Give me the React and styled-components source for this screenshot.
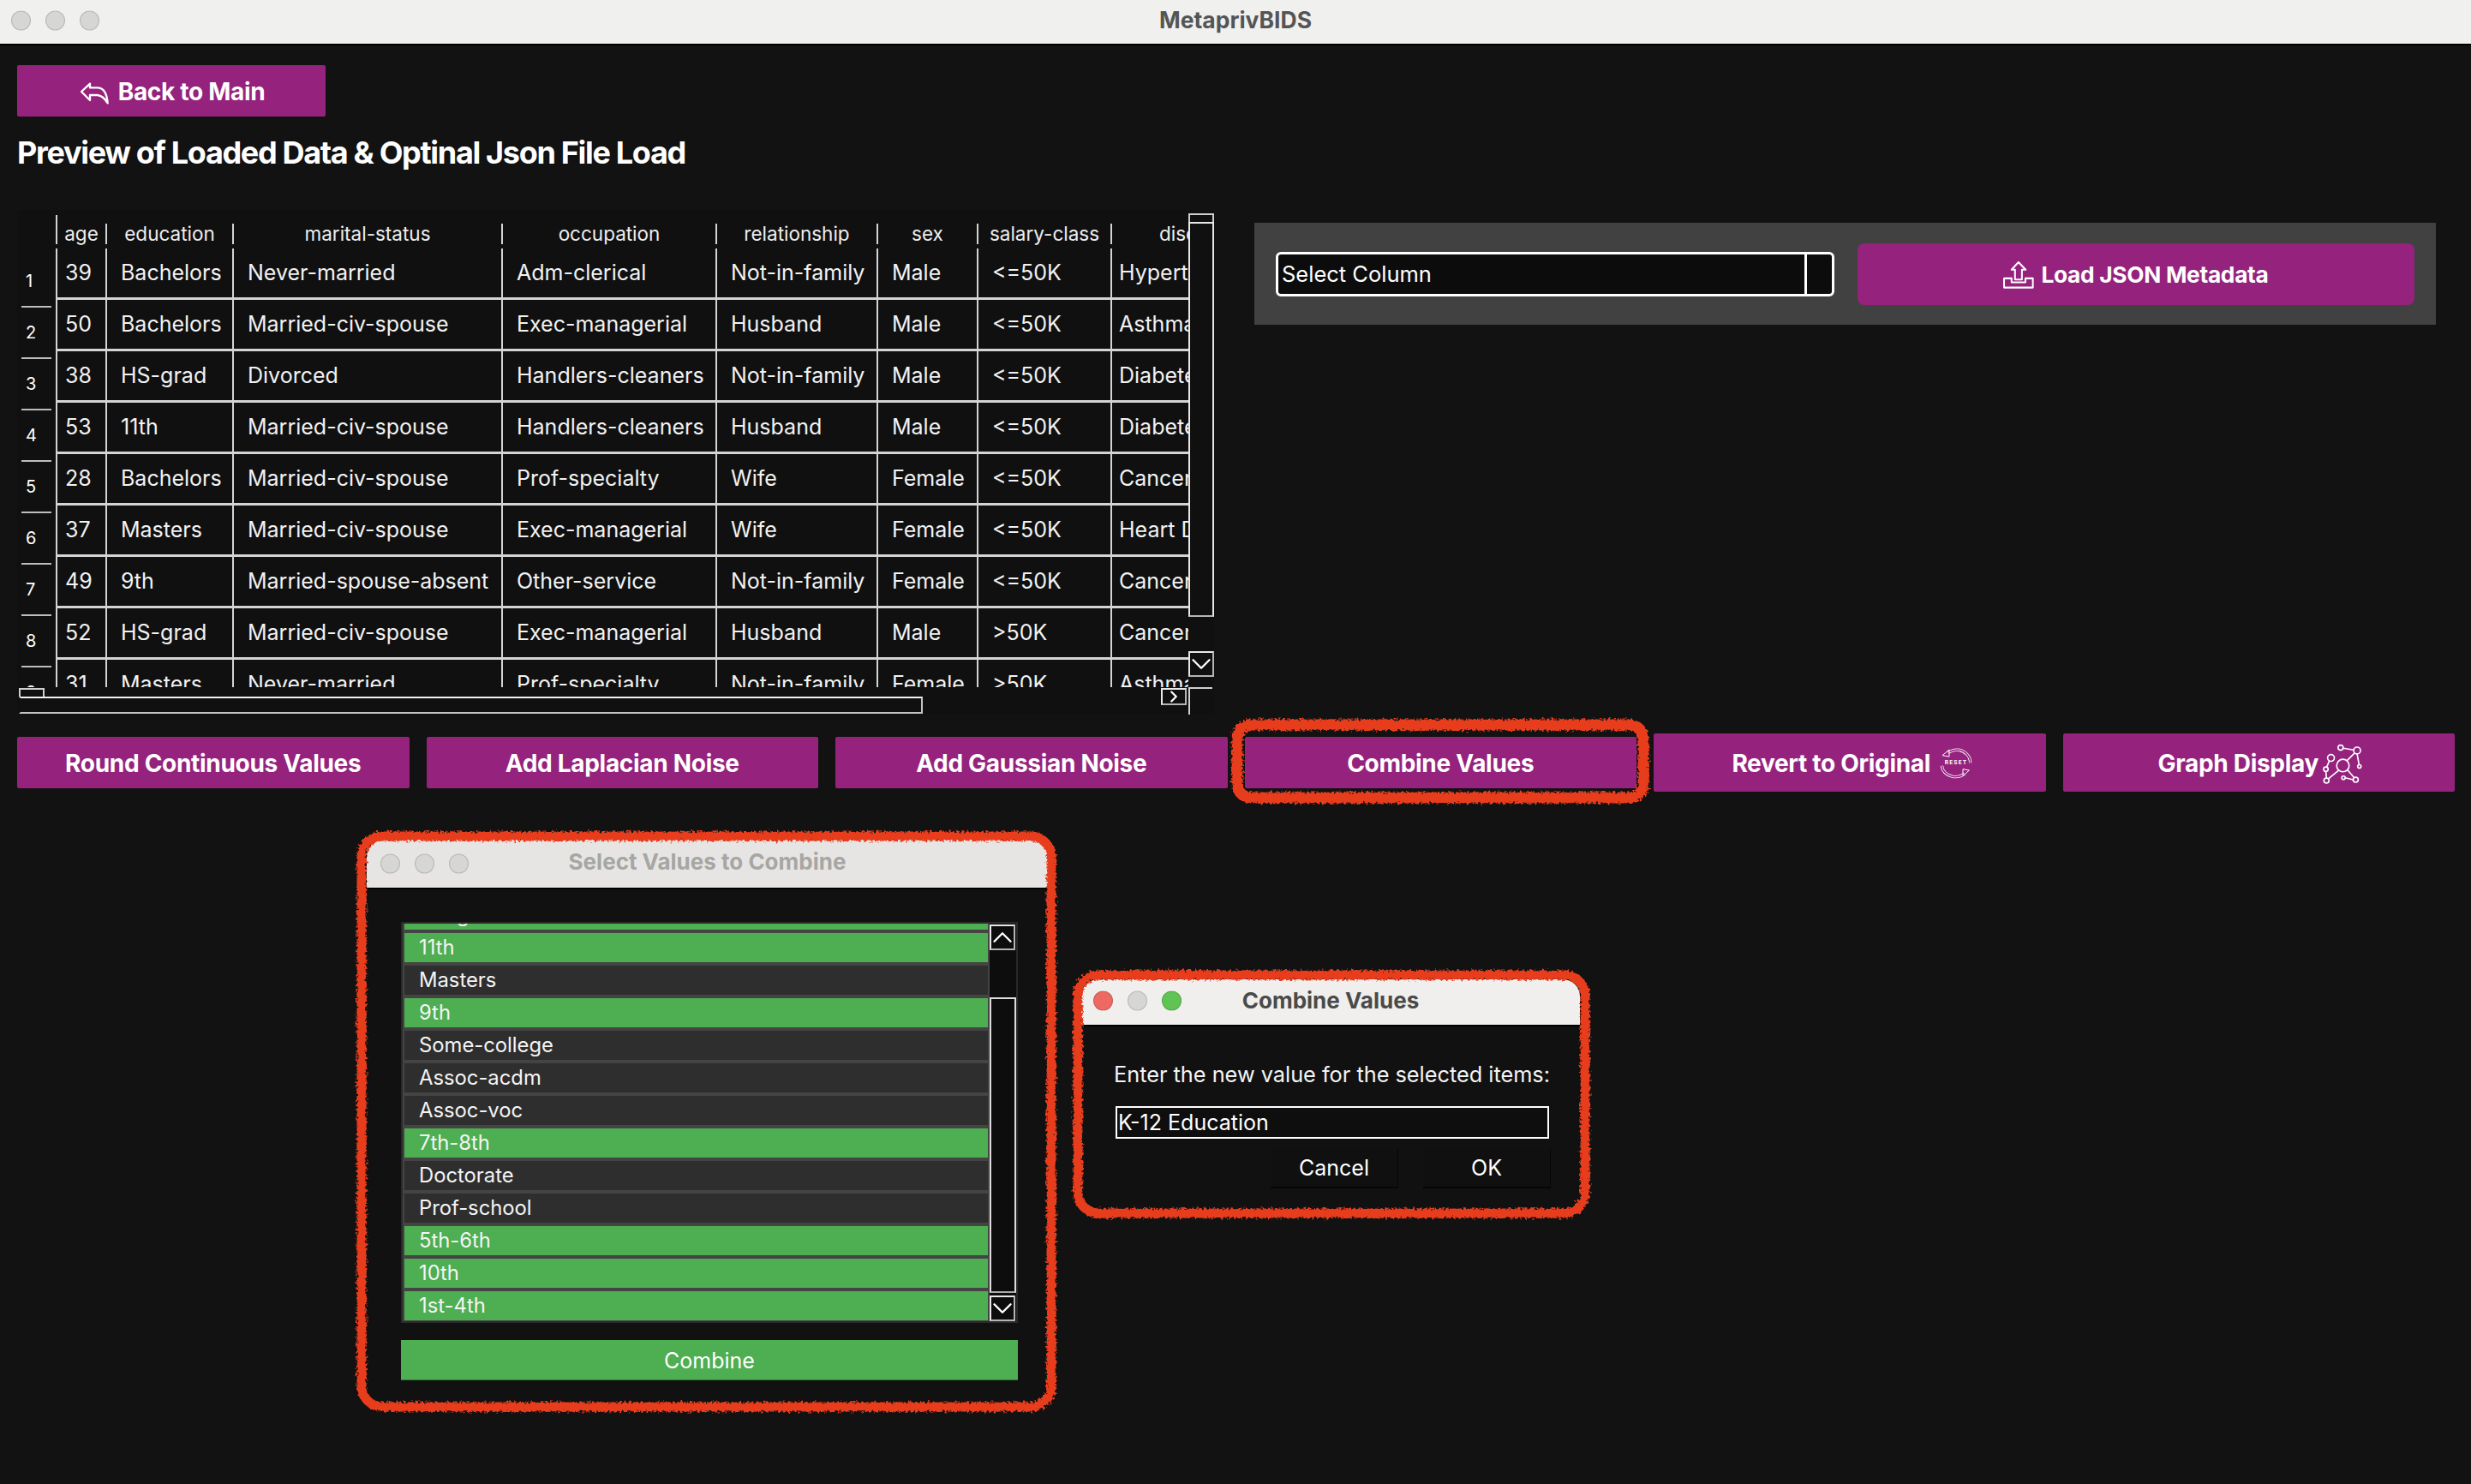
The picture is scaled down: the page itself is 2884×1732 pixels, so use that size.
import React from 'react'
import styled, { createGlobalStyle } from 'styled-components'
import { ChevronDown, ChevronUp, ChevronRight } from 'lucide-react'

const PURPLE = '#95237e'
const GREEN = '#4eae52'
const LINE = '#d4d4d4'

const columns = ['age', 'education', 'marital-status', 'occupation', 'relationship', 'sex', 'salary-class', 'disease']

const rows = [
  ['39', 'Bachelors', 'Never-married', 'Adm-clerical', 'Not-in-family', 'Male', '<=50K', 'Hypertension'],
  ['50', 'Bachelors', 'Married-civ-spouse', 'Exec-managerial', 'Husband', 'Male', '<=50K', 'Asthma'],
  ['38', 'HS-grad', 'Divorced', 'Handlers-cleaners', 'Not-in-family', 'Male', '<=50K', 'Diabetes'],
  ['53', '11th', 'Married-civ-spouse', 'Handlers-cleaners', 'Husband', 'Male', '<=50K', 'Diabetes'],
  ['28', 'Bachelors', 'Married-civ-spouse', 'Prof-specialty', 'Wife', 'Female', '<=50K', 'Cancer'],
  ['37', 'Masters', 'Married-civ-spouse', 'Exec-managerial', 'Wife', 'Female', '<=50K', 'Heart Disease'],
  ['49', '9th', 'Married-spouse-absent', 'Other-service', 'Not-in-family', 'Female', '<=50K', 'Cancer'],
  ['52', 'HS-grad', 'Married-civ-spouse', 'Exec-managerial', 'Husband', 'Male', '>50K', 'Cancer'],
  ['31', 'Masters', 'Never-married', 'Prof-specialty', 'Not-in-family', 'Female', '>50K', 'Asthma'],
]

const values = [
  ['HS-grad', true],
  ['11th', true],
  ['Masters', false],
  ['9th', true],
  ['Some-college', false],
  ['Assoc-acdm', false],
  ['Assoc-voc', false],
  ['7th-8th', true],
  ['Doctorate', false],
  ['Prof-school', false],
  ['5th-6th', true],
  ['10th', true],
  ['1st-4th', true],
]

const GlobalStyle = createGlobalStyle`
  html, body {
    margin: 0;
    padding: 0;
    background: #121212;
  }
  body {
    font-family: Inter, "Liberation Sans", sans-serif;
    color: #fff;
  }
  * {
    box-sizing: border-box;
  }
`

const Page = styled.div`
  position: relative;
  width: 2884px;
  height: 1732px;
  overflow: hidden;
  background: #121212;
`

const TitleBar = styled.div`
  position: relative;
  display: flex;
  align-items: center;
  justify-content: center;
  height: ${(p) => p.$height}px;
  padding-bottom: 5px;
  background: ${(p) => p.$bg};
  color: ${(p) => p.$color};
  font-size: ${(p) => p.$size}px;
  font-weight: 700;
  border-bottom: 2px solid #000;
`

const Lights = styled.div`
  position: absolute;
  left: ${(p) => p.$left}px;
  top: ${(p) => p.$top}px;
  transform: translateY(-50%);
  display: flex;
  gap: 17px;
`

const Light = styled.span`
  width: 23px;
  height: 23px;
  border-radius: 50%;
  background: ${(p) => p.$color || '#d6d6d4'};
  border: 1px solid rgba(0, 0, 0, 0.14);
`

const Content = styled.main`
  padding: 23px 19px 0 20px;
`

const PurpleButton = styled.button`
  display: flex;
  align-items: center;
  justify-content: center;
  border: 0;
  padding: 1px 0 0;
  border-radius: 2px;
  background: ${PURPLE};
  color: #fff;
  font-family: Inter, "Liberation Sans", sans-serif;
  font-size: 28px;
  font-weight: 700;
  letter-spacing: -0.3px;
`

const BackButton = styled(PurpleButton)`
  width: 360px;
  height: 60px;
  gap: 3px;
  padding-right: 6px;
`

const Heading = styled.h1`
  margin: 20px 0 0;
  height: 44px;
  line-height: 44px;
  font-size: 36px;
  font-weight: 700;
  letter-spacing: -1.32px;
`

const TopSection = styled.section`
  display: flex;
  align-items: flex-start;
  margin-top: 45px;
`

const TableFrame = styled.div`
  display: grid;
  grid-template-columns: 1367px 30px;
  grid-template-rows: 557px 32px;
  width: 1397px;
  height: 589px;
  background: #101010;
`

const TableView = styled.div`
  display: flex;
  overflow: hidden;
`

const RowHeaders = styled.div`
  flex: 0 0 45px;
  padding-top: 54px;
`

const RowHeader = styled.div`
  height: 60px;
  margin-left: 5px;
  width: 35px;
  padding: 14px 0 0 5px;
  border-bottom: 2px solid #bdbdbd;
  font-size: 20px;
  line-height: 30px;
`

const DataGrid = styled.div`
  flex: 1;
  overflow: hidden;
`

const GridRow = styled.div`
  display: grid;
  grid-template-columns: 58px 148px 314px 250px 188px 117px 156px 194px;
`

const HeaderRow = styled(GridRow)`
  height: 45px;
  padding-top: 16px;
`

const HeaderCell = styled.div`
  height: 24px;
  border-left: 2px solid ${LINE};
  white-space: nowrap;
  text-align: center;
  font-size: 22.5px;
  line-height: 24px;
  color: #ededed;

  &:first-child {
    height: 34px;
    margin-top: -10px;
    padding-top: 10px;
  }
`

const DataRow = styled(GridRow)`
  height: 60px;
`

const DataCell = styled.div`
  padding: 11px 0 0 ${(p) => p.$pad}px;
  height: 60px;
  border-left: 2px solid ${LINE};
  border-bottom: 3px solid ${LINE};
  white-space: nowrap;
  font-size: 25px;
  line-height: 34px;
  color: #f2f2f2;
`

const VScroll = styled.div`
  display: flex;
  flex-direction: column;
  padding-top: 4px;
`

const ScrollCap = styled.div`
  height: 10px;
  border: 2px solid #cfcfcf;
  border-bottom: 0;
`

const VThumb = styled.div`
  height: 461px;
  border: 2px solid #e8e8e8;
  border-bottom-color: #b5b5b5;
`

const ArrowBox = styled.div`
  display: flex;
  align-items: center;
  justify-content: center;
  flex-shrink: 0;
  width: 30px;
  height: 30px;
  margin-top: ${(p) => p.$top || 0}px;
  border: 2px solid #e8e8e8;
  border-bottom-color: #b5b5b5;
  border-right-color: #b5b5b5;
  color: #fff;

  svg {
    flex-shrink: 0;
  }
`

const HScroll = styled.div`
  display: flex;
  align-items: flex-start;
  padding: 1px 2px 0 2px;
`

const HThumbStack = styled.div`
  width: 1055px;
  display: flex;
  flex-direction: column;
`

const HCap = styled.div`
  width: 30px;
  height: 10px;
  border: 2px solid #cfcfcf;
  border-bottom: 0;
`

const HThumb = styled.div`
  height: 20px;
  border: 2px solid #f2f2f2;
  border-left-color: #101010;
  border-bottom-color: #c4c4c4;
  border-right-color: #c4c4c4;
`

const HArrow = styled(ArrowBox)`
  height: 20px;
  margin-left: auto;
`

const ScrollCorner = styled.div`
  border-top: 2px solid #d0d0d0;
  border-left: 2px solid #d0d0d0;
  margin-right: 2px;
`

const SidePanel = styled.div`
  display: flex;
  align-items: center;
  gap: 27px;
  width: 1379px;
  height: 119px;
  margin: 15px 0 0 47px;
  padding-left: 25px;
  background: #414141;
`

const SelectBox = styled.div`
  display: flex;
  width: 652px;
  height: 52px;
  background: #0c0c0c;
  border: 3px solid #fff;
  border-radius: 6px;
  font-size: 25.5px;
  line-height: 46px;
`

const SelectLabel = styled.div`
  flex: 1;
  padding-left: 4px;
  border-right: 3px solid #fff;
`

const SelectCaret = styled.div`
  width: 29px;
`

const LoadButton = styled(PurpleButton)`
  width: 650px;
  height: 72px;
  gap: 5px;
  padding-right: 3px;
  border-radius: 8px;
  font-size: 26.3px;
`

const ActionBar = styled.div`
  display: flex;
  align-items: center;
  gap: 20px;
  height: 68px;
  margin-top: 22px;
`

const ActionButton = styled(PurpleButton)`
  width: 458px;
  height: ${(p) => (p.$tall ? 68 : 60)}px;
  gap: ${(p) => p.$gap || 0}px;
  padding-left: ${(p) => (p.$tall ? 7 : 0)}px;
`

const DialogWindow = styled.div`
  position: absolute;
  left: ${(p) => p.$left}px;
  top: ${(p) => p.$top}px;
  width: ${(p) => p.$width}px;
  height: ${(p) => p.$height}px;
  overflow: hidden;
  border-radius: 20px;
  background: #111;
`

const SelectBody = styled.div`
  padding: 38px 35px 0 40px;
`

const ListFrame = styled.div`
  display: flex;
  width: 720px;
  height: 468px;
  padding: 2px;
  background: #2a2a2a;
`

const ListView = styled.div`
  flex: 0 0 685px;
  padding-left: 2px;
  overflow: hidden;
  background: #444;
`

const ListItems = styled.div`
  display: flex;
  flex-direction: column;
  gap: 4px;
  margin-top: -27px;
  margin-right: 2px;
`

const ListItem = styled.div`
  flex: 0 0 34px;
  padding-left: 17px;
  background: ${(p) => (p.$selected ? GREEN : '#2e2e2e')};
  font-size: 23.8px;
  line-height: 34px;
  color: #f4f4f4;
`

const ListScroll = styled.div`
  flex: 1;
  display: flex;
  flex-direction: column;
  padding: 1px 0 0 0;
  background: #0d0d0d;
`

const ListThumb = styled.div`
  height: 345px;
  margin-top: 55px;
  border: 2px solid #dcdcdc;
  border-bottom-color: #aaa;
`

const CombineButton = styled.button`
  display: block;
  width: 720px;
  height: 47px;
  margin-top: 20px;
  padding: 2px 0 0;
  border: 0;
  border-bottom: 1px solid #2f7a33;
  background: ${GREEN};
  color: #fff;
  font-family: Inter, "Liberation Sans", sans-serif;
  font-size: 25px;
`

const PromptBody = styled.div`
  padding: 39px 35px 0 38px;
`

const PromptLabel = styled.div`
  font-size: 25.3px;
  line-height: 34px;
  white-space: nowrap;
  color: #f4f4f4;
`

const PromptInput = styled.input`
  display: block;
  width: 506px;
  height: 38px;
  margin: 20px 0 0 2px;
  padding: 0 0 0 1px;
  border: 2px solid #fff;
  border-radius: 0;
  outline: 0;
  background: #0e0e0e;
  color: #fff;
  font-family: Inter, "Liberation Sans", sans-serif;
  font-size: 25px;
`

const PromptActions = styled.div`
  display: flex;
  justify-content: flex-end;
  gap: 29px;
  margin: 11px -1px 0 0;
`

const PromptButton = styled.button`
  width: 149px;
  height: 47px;
  padding: 0;
  border: 0;
  border-right: 1px solid #060606;
  border-bottom: 2px solid #060606;
  background: #101010;
  color: #fff;
  font-family: Inter, "Liberation Sans", sans-serif;
  font-size: 25px;
`

const Annotations = styled.svg`
  position: absolute;
  left: 0;
  top: 0;
  pointer-events: none;
`

const BackIcon = () => (
  <svg width="50" height="40" viewBox="0 0 150 120" fill="none" stroke="#fff" strokeWidth="7" strokeLinejoin="round">
    <path d="M30 60 L60 32 V46 H88 Q118 48 122 100 Q106 74 86 72 H60 V90 Z" />
  </svg>
)

const UploadIcon = () => (
  <svg width="42" height="37" viewBox="30 20 125 110" fill="none" stroke="#fff" strokeWidth="6" strokeLinejoin="round">
    <path d="M42 88 V120 H142 V88 H116 V102 H68 V88 Z" />
    <path d="M92 32 L68 58 H80 V92 H104 V58 H117 Z" />
  </svg>
)

const ResetIcon = () => (
  <svg width="40" height="40" viewBox="30 30 120 120" fill="none" strokeLinecap="butt">
    <path d="M62 52 Q100 30 128 58 Q140 70 140 88" stroke="#fff" strokeWidth="10" />
    <path d="M62 52 Q100 30 128 58 Q140 70 140 88" stroke={PURPLE} strokeWidth="5" />
    <path d="M42 62 L66 42 V66 Z" stroke="#fff" strokeWidth="3" />
    <path d="M40 98 Q44 128 78 136 Q102 140 120 126" stroke="#fff" strokeWidth="10" />
    <path d="M40 98 Q44 128 78 136 Q102 140 120 126" stroke={PURPLE} strokeWidth="5" />
    <path d="M136 114 L114 134 V110 Z" stroke="#fff" strokeWidth="3" />
    <text x="90" y="94" textAnchor="middle" fill="#fff" fontSize="20" fontWeight="700" letterSpacing="3" fontFamily="Inter, sans-serif">RESET</text>
  </svg>
)

const GraphIcon = () => (
  <svg width="53" height="52" viewBox="30 10 160 155" fill="none" stroke="#fff" strokeWidth="5">
    <path d="M124 78 L152 50 M111 34 L148 40 M160 54 L167 92 M95 112 L58 142 M50 116 L52 139 M62 79 L53 100 M126 110 L150 138 M118 138 L146 145" />
    <circle cx="110" cy="95" r="22" />
    <circle cx="160" cy="42" r="12" />
    <circle cx="102" cy="32" r="9" />
    <circle cx="168" cy="98" r="6" />
    <circle cx="68" cy="68" r="12" />
    <circle cx="50" cy="108" r="8" />
    <circle cx="52" cy="148" r="9" />
    <circle cx="112" cy="138" r="6" />
    <circle cx="155" cy="145" r="9" />
  </svg>
)

// the red marker rings somebody drew over the screenshot
const MarkerRings = () => (
  <Annotations width="2884" height="1732">
    <defs>
      <filter id="rough" x="-5%" y="-5%" width="110%" height="110%">
        <feTurbulence type="fractalNoise" baseFrequency="0.35" numOctaves="2" seed="4" />
        <feDisplacementMap in="SourceGraphic" scale="8" />
      </filter>
    </defs>
    <g fill="none" stroke="#e83c1e" strokeWidth="11" filter="url(#rough)">
      <rect x="1444" y="846" width="474" height="85" rx="16" strokeWidth="13" />
      <rect x="422" y="976" width="805" height="666" rx="24" />
      <rect x="1258" y="1138" width="592" height="278" rx="24" />
    </g>
  </Annotations>
)

const cellPadding = (index) => {
  if (index === 0) return 9
  if (index === 7) return 8
  return 16
}

const DataTable = () => (
  <TableFrame>
    <TableView>
      <RowHeaders>
        {rows.map((row, index) => (
          <RowHeader key={index}>{index + 1}</RowHeader>
        ))}
      </RowHeaders>
      <DataGrid>
        <HeaderRow>
          {columns.map((name) => (
            <HeaderCell key={name}>{name}</HeaderCell>
          ))}
        </HeaderRow>
        {rows.map((row, index) => (
          <DataRow key={index}>
            {row.map((value, cell) => (
              <DataCell key={cell} $pad={cellPadding(cell)}>{value}</DataCell>
            ))}
          </DataRow>
        ))}
      </DataGrid>
    </TableView>
    <VScroll>
      <ScrollCap />
      <VThumb />
      <ArrowBox $top={40}>
        <ChevronDown size={38} strokeWidth={1.5} />
      </ArrowBox>
    </VScroll>
    <HScroll>
      <HThumbStack>
        <HCap />
        <HThumb />
      </HThumbStack>
      <HArrow>
        <ChevronRight size={22} strokeWidth={2.5} />
      </HArrow>
    </HScroll>
    <ScrollCorner />
  </TableFrame>
)

const SelectValuesDialog = () => (
  <DialogWindow $left={428} $top={980} $width={795} $height={656}>
    <TitleBar $height={58} $bg="#e6e5e3" $color="#a6a6a4" $size={26}>
      <Lights $left={16} $top={28}>
        <Light />
        <Light />
        <Light />
      </Lights>
      Select Values to Combine
    </TitleBar>
    <SelectBody>
      <ListFrame>
        <ListView>
          <ListItems>
            {values.map(([name, selected]) => (
              <ListItem key={name} $selected={selected}>{name}</ListItem>
            ))}
          </ListItems>
        </ListView>
        <ListScroll>
          <ArrowBox>
            <ChevronUp size={38} strokeWidth={1.5} />
          </ArrowBox>
          <ListThumb />
          <ArrowBox $top={3}>
            <ChevronDown size={38} strokeWidth={1.5} />
          </ArrowBox>
        </ListScroll>
      </ListFrame>
      <CombineButton>Combine</CombineButton>
    </SelectBody>
  </DialogWindow>
)

const NewValueDialog = () => (
  <DialogWindow $left={1262} $top={1143} $width={582} $height={266}>
    <TitleBar $height={55} $bg="#f0efed" $color="#4a4a4a" $size={26}>
      <Lights $left={14} $top={25}>
        <Light $color="#ec6a62" />
        <Light />
        <Light $color="#60c454" />
      </Lights>
      Combine Values
    </TitleBar>
    <PromptBody>
      <PromptLabel>Enter the new value for the selected items:</PromptLabel>
      <PromptInput defaultValue="K-12 Education" />
      <PromptActions>
        <PromptButton>Cancel</PromptButton>
        <PromptButton>OK</PromptButton>
      </PromptActions>
    </PromptBody>
  </DialogWindow>
)

export default function App() {
  return (
    <Page>
      <GlobalStyle />
      <TitleBar $height={53} $bg="#f0f0ee" $color="#555" $size={26.5}>
        <Lights $left={13} $top={24}>
          <Light />
          <Light />
          <Light />
        </Lights>
        MetaprivBIDS
      </TitleBar>
      <Content>
        <BackButton>
          <BackIcon />
          Back to Main
        </BackButton>
        <Heading>Preview of Loaded Data &amp; Optinal Json File Load</Heading>
        <TopSection>
          <DataTable />
          <SidePanel>
            <SelectBox>
              <SelectLabel>Select Column</SelectLabel>
              <SelectCaret />
            </SelectBox>
            <LoadButton>
              <UploadIcon />
              Load JSON Metadata
            </LoadButton>
          </SidePanel>
        </TopSection>
        <ActionBar>
          <ActionButton>Round Continuous Values</ActionButton>
          <ActionButton>Add Laplacian Noise</ActionButton>
          <ActionButton>Add Gaussian Noise</ActionButton>
          <ActionButton>Combine Values</ActionButton>
          <ActionButton $tall $gap={10}>
            Revert to Original
            <ResetIcon />
          </ActionButton>
          <ActionButton $tall $gap={2}>
            Graph Display
            <GraphIcon />
          </ActionButton>
        </ActionBar>
      </Content>
      <SelectValuesDialog />
      <NewValueDialog />
      <MarkerRings />
    </Page>
  )
}
